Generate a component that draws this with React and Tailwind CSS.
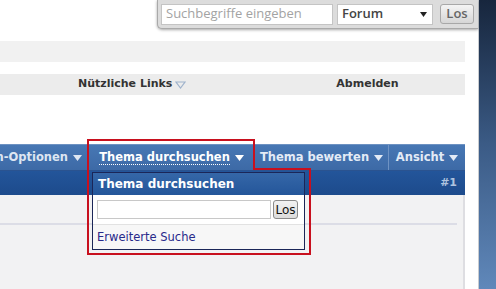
import React from "react";

function Caret({ className = "" }) {
  return (
    <svg width="9" height="6" viewBox="0 0 9 6" className={className}>
      <path d="M0 0 H9 L4.5 6 Z" fill="currentColor" />
    </svg>
  );
}

function NavItem({ label, width, selected }) {
  return (
    <div
      className={`relative flex h-full shrink-0 items-center justify-center gap-[5px] border-l border-[#6f93c3] ${width} ${
        selected ? "text-white" : "text-[#e3ebf6]"
      }`}
    >
      <span className={selected ? "border-b border-dotted border-white leading-[13px]" : "leading-[13px]"}>{label}</span>
      <Caret />
    </div>
  );
}

export default function App() {
  return (
    <div
      className="relative flex h-[289px] w-[496px] overflow-hidden bg-white"
      style={{ fontFamily: '"DejaVu Sans", Verdana, sans-serif' }}
    >
      {/* page */}
      <div className="flex w-[479px] shrink-0 flex-col border-r border-[#c9ccd0] bg-white">
        {/* top search bar */}
        <div className="flex h-[29px] justify-end">
          <div
            className="flex w-[321px] items-center gap-[4px] rounded-bl-[5px] border-b border-l border-[#a9a9a9] bg-[#dcdcdc] pl-[3px] shadow-[0_1px_3px_rgba(0,0,0,0.35)]"
            style={{ fontFamily: '"Open Sans", "DejaVu Sans", sans-serif' }}
          >
            <div className="flex h-[21px] w-[172px] items-center border border-[#c4c4c4] bg-white pl-[4px] text-[13px] text-[#a3a3a3]">
              Suchbegriffe eingeben
            </div>
            <div className="flex h-[21px] w-[96px] items-center justify-between border border-[#c4c4c4] bg-white pl-[4px] pr-[5px] text-[13px] font-semibold text-[#444]">
              <span>Forum</span>
              <svg width="7" height="5" viewBox="0 0 7 5">
                <path d="M0 0 H7 L3.5 5 Z" fill="#222" />
              </svg>
            </div>
            <div className="ml-[3px] flex h-[20px] w-[34px] items-center justify-center rounded-[3px] border border-[#a8a8a8] bg-gradient-to-b from-[#f4f4f4] to-[#d6d6d6] text-[13px] font-semibold text-[#666]">
              Los
            </div>
          </div>
        </div>

        {/* bar 1 */}
        <div className="mt-[12px] h-[21px] w-[465px] bg-[#f1f1f1]" />

        {/* bar 2 */}
        <div className="relative mt-[12px] flex h-[21px] w-[465px] items-center bg-[#ececec] text-[11px] font-bold text-[#333]">
          <div className="ml-[78px] flex items-center gap-[3px]">
            <span>Nützliche Links</span>
            <svg width="11" height="8" viewBox="0 0 11 8">
              <path d="M1 1 H10 L5.5 7 Z" fill="none" stroke="#9fb3cc" strokeWidth="1.2" />
            </svg>
          </div>
          <span className="ml-[150px]">Abmelden</span>
        </div>

        {/* nav bar */}
        <div className="mt-[49px] flex h-[26px] w-[465px] justify-end overflow-hidden border-t border-[#6d92c2] bg-gradient-to-b from-[#4777b4] to-[#3d6aa6] text-[11.5px] font-bold">
          <div className="flex h-full shrink-0 items-center justify-end gap-[5px] pr-[6px] text-[#dde6f2]">
            <span>Themen-Optionen</span>
            <Caret />
          </div>
          <NavItem label="Thema durchsuchen" width="w-[166px]" selected />
          <NavItem label="Thema bewerten" width="w-[134px]" />
          <NavItem label="Ansicht" width="w-[77px]" />
        </div>

        {/* dark header row */}
        <div className="flex h-[25px] w-[465px] items-center justify-end border-t border-[#2a5390] bg-gradient-to-b from-[#23559a] to-[#1d4b8c] pr-[8px] text-[11px] font-bold text-[#aec3df]">
          #1
        </div>

        {/* content */}
        <div className="flex w-[465px] flex-1 flex-col border-r-2 border-[#dedee2] bg-[#f2f2f3]">
          <div className="mt-[28px] h-[2px] w-[457px] bg-[#dcdde6]" />
        </div>
      </div>

      {/* desktop strip */}
      <div className="flex-1 bg-gradient-to-b from-[#17263d] via-[#3b5b86] to-[#6088ba]" />

      {/* popup menu */}
      <div className="absolute left-[92px] top-[172px] flex w-[213px] flex-col border border-[#1b2658] bg-[#f6f6f6]">
        <div className="flex h-[22px] items-center bg-gradient-to-b from-[#3567a8] to-[#24569a] pl-[5px] text-[12px] font-bold text-white">
          Thema durchsuchen
        </div>
        <div className="flex items-center gap-[2px] border-b border-[#e2e2e2] bg-white px-[4px] py-[5px]">
          <div className="h-[19px] w-[174px] border border-[#c8c8c8] bg-white" />
          <div className="flex h-[19px] w-[25px] items-center justify-center rounded-[3px] border border-[#8a8a8a] bg-gradient-to-b from-[#f2f2f2] to-[#dcdcdc] text-[12px] text-[#111]">
            Los
          </div>
        </div>
        <div className="flex h-[24px] items-center bg-[#f7f7f7] pl-[4px] pt-[2px] text-[11.5px] text-[#28298a]">
          Erweiterte Suche
        </div>
      </div>

      {/* red annotation outline */}
      <svg className="pointer-events-none absolute left-0 top-0" width="496" height="289">
        <path d="M88 140 H254 V169 H310 V254 H88 Z" fill="none" stroke="#c8101e" strokeWidth="2" />
      </svg>
    </div>
  );
}
